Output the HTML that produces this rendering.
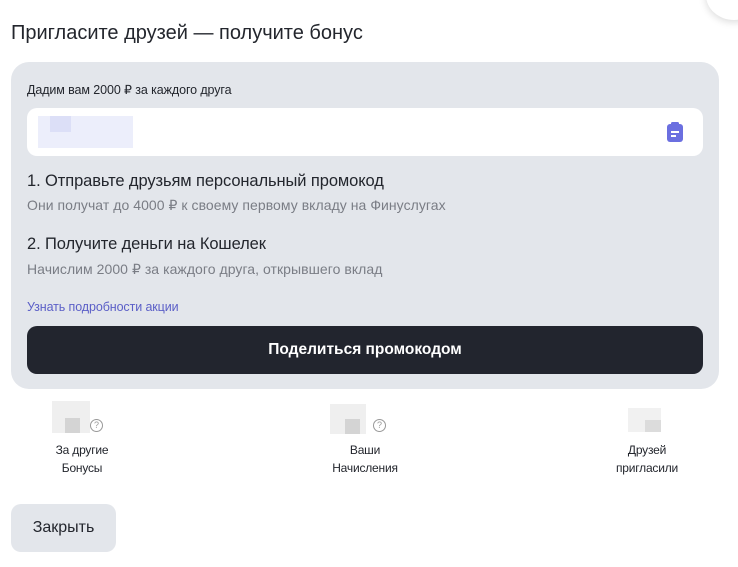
<!DOCTYPE html>
<html><head><meta charset="utf-8"><style>
body{margin:0;width:738px;height:567px;background:#fff;font-family:"Liberation Sans",sans-serif;position:relative;overflow:hidden;color:#23262d}
.a{position:absolute;white-space:nowrap}
.pix{position:absolute}
</style></head><body>
<div class="a" style="left:706px;top:-30px;width:56px;height:50px;border-radius:50%;background:#fff;box-shadow:0 2px 8px rgba(0,0,0,.15)"></div>
<div class="a" style="left:11px;top:22px;font-size:20px;letter-spacing:0px">Пригласите друзей — получите бонус</div>
<div class="a" style="left:11px;top:62px;width:708px;height:327px;border-radius:18px;background:#e3e6eb"></div>
<div class="a" style="left:27px;top:82px;font-size:12.5px;letter-spacing:-0.1px">Дадим вам 2000 ₽ за каждого друга</div>
<div class="a" style="left:27px;top:108px;width:676px;height:48px;border-radius:10px;background:#fff"></div>
<div class="pix" style="left:38px;top:116px;width:95px;height:32px;background:#eceefb"></div>
<div class="pix" style="left:50px;top:116px;width:21px;height:16px;background:#dcdff7"></div>
<svg class="a" style="left:666px;top:121px" width="18" height="22" viewBox="0 0 18 22"><rect x="1" y="3" width="16" height="18" rx="3" fill="#6b6fe0"/><rect x="5" y="1" width="8" height="4" rx="1.5" fill="#6b6fe0"/><rect x="5" y="10" width="8" height="2" fill="#fff"/><rect x="5" y="14" width="5" height="2" fill="#fff"/></svg>
<div class="a" style="left:27px;top:172px;font-size:16.5px;letter-spacing:-0.1px">1. Отправьте друзьям персональный промокод</div>
<div class="a" style="left:27px;top:197px;font-size:14px;color:#7a7d85;letter-spacing:0.05px">Они получат до 4000 ₽ к своему первому вкладу на Финуслугах</div>
<div class="a" style="left:27px;top:235px;font-size:16.5px;letter-spacing:-0.1px">2. Получите деньги на Кошелек</div>
<div class="a" style="left:27px;top:261px;font-size:14px;color:#7a7d85;letter-spacing:0.05px">Начислим 2000 ₽ за каждого друга, открывшего вклад</div>
<div class="a" style="left:27px;top:300px;font-size:12.5px;color:#5b5fc7;letter-spacing:-0.1px">Узнать подробности акции</div>
<div class="a" style="left:27px;top:326px;width:676px;height:48px;border-radius:10px;background:#22252e;color:#fff;font-weight:bold;font-size:15.5px;text-align:center;line-height:48px">Поделиться промокодом</div>

<div class="pix" style="left:52px;top:401px;width:38px;height:32px;background:#efefef"></div>
<div class="pix" style="left:65px;top:418px;width:15px;height:15px;background:#d4d4d4"></div>
<div class="a" style="left:90px;top:419px;width:11px;height:11px;border:1px solid #999;border-radius:50%;font-size:9px;color:#999;text-align:center;line-height:11px">?</div>
<div class="a" style="left:32px;top:441px;width:100px;text-align:center;font-size:12px;line-height:18px;letter-spacing:-0.2px">За другие<br>Бонусы</div>

<div class="pix" style="left:330px;top:404px;width:36px;height:30px;background:#efefef"></div>
<div class="pix" style="left:345px;top:419px;width:15px;height:15px;background:#d4d4d4"></div>
<div class="a" style="left:373px;top:419px;width:11px;height:11px;border:1px solid #999;border-radius:50%;font-size:9px;color:#999;text-align:center;line-height:11px">?</div>
<div class="a" style="left:315px;top:441px;width:100px;text-align:center;font-size:12px;line-height:18px;letter-spacing:-0.2px">Ваши<br>Начисления</div>

<div class="pix" style="left:628px;top:408px;width:33px;height:24px;background:#f1f1f1"></div>
<div class="pix" style="left:645px;top:420px;width:16px;height:12px;background:#dcdcdc"></div>
<div class="a" style="left:597px;top:441px;width:100px;text-align:center;font-size:12px;line-height:18px;letter-spacing:-0.2px">Друзей<br>пригласили</div>

<div class="a" style="left:11px;top:504px;width:105px;height:48px;border-radius:10px;background:#e3e6eb;font-size:16px;text-align:center;line-height:48px">Закрыть</div>
</body></html>
